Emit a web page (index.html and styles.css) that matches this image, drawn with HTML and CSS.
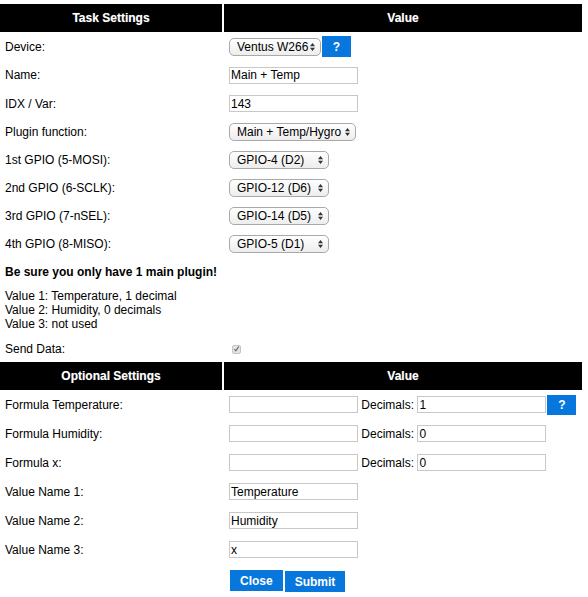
FILE: index.html
```html
<!DOCTYPE html>
<html>
<head>
<meta charset="utf-8">
<link rel="stylesheet" href="styles.css">
</head>
<body>
<table class="settings">
  <colgroup><col class="c1"><col class="c2"></colgroup>
  <tr class="head"><th>Task Settings</th><th class="v">Value</th></tr>
  <tr class="r29"><td>Device:</td><td class="v"><span class="sel w92"><span>Ventus W266</span><svg class="arr" width="7" height="10" viewBox="0 0 7 10"><path d="M1 4.2L3.5 1 6 4.2Z M1 5.8L3.5 9 6 5.8Z" fill="#333"/></svg></span><a class="btn q">?</a></td></tr>
  <tr class="r28"><td>Name:</td><td class="v"><input class="inp" value="Main + Temp"></td></tr>
  <tr class="r29"><td>IDX / Var:</td><td class="v"><input class="inp" value="143"></td></tr>
  <tr class="r28"><td>Plugin function:</td><td class="v"><span class="sel w127"><span>Main + Temp/Hygro</span><svg class="arr" width="7" height="10" viewBox="0 0 7 10"><path d="M1 4.2L3.5 1 6 4.2Z M1 5.8L3.5 9 6 5.8Z" fill="#333"/></svg></span></td></tr>
  <tr class="r28"><td>1st GPIO (5-MOSI):</td><td class="v"><span class="sel w100"><span>GPIO-4 (D2)</span><svg class="arr" width="7" height="10" viewBox="0 0 7 10"><path d="M1 4.2L3.5 1 6 4.2Z M1 5.8L3.5 9 6 5.8Z" fill="#333"/></svg></span></td></tr>
  <tr class="r28"><td>2nd GPIO (6-SCLK):</td><td class="v"><span class="sel w100"><span>GPIO-12 (D6)</span><svg class="arr" width="7" height="10" viewBox="0 0 7 10"><path d="M1 4.2L3.5 1 6 4.2Z M1 5.8L3.5 9 6 5.8Z" fill="#333"/></svg></span></td></tr>
  <tr class="r28"><td>3rd GPIO (7-nSEL):</td><td class="v"><span class="sel w100"><span>GPIO-14 (D5)</span><svg class="arr" width="7" height="10" viewBox="0 0 7 10"><path d="M1 4.2L3.5 1 6 4.2Z M1 5.8L3.5 9 6 5.8Z" fill="#333"/></svg></span></td></tr>
  <tr class="r28"><td>4th GPIO (8-MISO):</td><td class="v"><span class="sel w100"><span>GPIO-5 (D1)</span><svg class="arr" width="7" height="10" viewBox="0 0 7 10"><path d="M1 4.2L3.5 1 6 4.2Z M1 5.8L3.5 9 6 5.8Z" fill="#333"/></svg></span></td></tr>
  <tr class="note"><td colspan="2"><b>Be sure you only have 1 main plugin!</b></td></tr>
  <tr class="vals"><td colspan="2">Value 1: Temperature, 1 decimal<br>Value 2: Humidity, 0 decimals<br>Value 3: not used</td></tr>
  <tr class="r27"><td>Send Data:</td><td class="v"><span class="chk"><svg width="8" height="8" viewBox="0 0 8 8"><path d="M1.5 4.2L3.2 6 6.6 1.4" fill="none" stroke="#6e6e6e" stroke-width="1.4"/></svg></span></td></tr>
  <tr class="head"><th>Optional Settings</th><th class="v">Value</th></tr>
  <tr class="r29"><td>Formula Temperature:</td><td class="v"><input class="inp" value=""> <span class="dec">Decimals:</span> <input class="inp" value="1"><a class="btn q q2">?</a></td></tr>
  <tr class="r29"><td>Formula Humidity:</td><td class="v"><input class="inp" value=""> <span class="dec">Decimals:</span> <input class="inp" value="0"></td></tr>
  <tr class="r29"><td>Formula x:</td><td class="v"><input class="inp" value=""> <span class="dec">Decimals:</span> <input class="inp" value="0"></td></tr>
  <tr class="r29"><td>Value Name 1:</td><td class="v"><input class="inp" value="Temperature"></td></tr>
  <tr class="r29"><td>Value Name 2:</td><td class="v"><input class="inp" value="Humidity"></td></tr>
  <tr class="r29"><td>Value Name 3:</td><td class="v"><input class="inp" value="x"></td></tr>
  <tr class="actions"><td></td><td class="v"><div class="btns"><a class="btn act">Close</a><button class="btn act sub">Submit</button></div></td></tr>
</table>
</body>
</html>
```
FILE: styles.css
```css
html, body {
  margin: 0;
  padding: 0;
  background: #fff;
}
body {
  font-family: "Liberation Sans", Arial, Helvetica, sans-serif;
  font-size: 12px;
  color: #000;
  padding-top: 4px;
}
.settings {
  width: 582px;
  table-layout: fixed;
  border-collapse: separate;
  border-spacing: 0;
}
.c1 { width: 222px; }
.c2 { width: 360px; }
.settings th, .settings td {
  padding: 0 5px;
  text-align: left;
  vertical-align: middle;
  font-size: 12px;
  box-sizing: border-box;
}
.settings .v {
  border-left: 2px solid #fff;
}
.head th {
  background: #000;
  color: #fff;
  font-weight: bold;
  text-align: center;
  height: 28px;
  text-shadow: 0 0 1px rgba(255,255,255,0.4);
}
.r27 td { height: 27px; }
.r28 td { height: 28px; }
.r29 td { height: 29px; }
.note td { height: 27px; }
.vals td {
  height: 50px;
  line-height: 14px;
}
.inp {
  box-sizing: border-box;
  width: 129px;
  height: 17px;
  border: 1px solid #c8c8c8;
  padding: 0 1px;
  margin: 0;
  font-family: "Liberation Sans", Arial, sans-serif;
  font-size: 12px;
  color: #000;
  vertical-align: middle;
  outline: none;
}
.dec {
  vertical-align: middle;
}
.sel {
  box-sizing: border-box;
  display: inline-flex;
  align-items: center;
  justify-content: space-between;
  height: 18px;
  padding: 0 4px 0 7px;
  border: 1px solid #a9a9a9;
  border-radius: 5px;
  background: linear-gradient(#ffffff, #ededed);
  vertical-align: middle;
  white-space: nowrap;
  font-size: 12px;
}
.arr { flex: none; }
.w92 { width: 92px; }
.w100 { width: 100px; }
.w127 { width: 127px; }
.btn {
  box-sizing: border-box;
  display: inline-flex;
  align-items: center;
  justify-content: center;
  background: #0777dd;
  color: #fff;
  font-family: "Liberation Sans", Arial, sans-serif;
  font-weight: bold;
  font-size: 12px;
  border: none;
  margin: 0;
  vertical-align: middle;
  cursor: pointer;
}
.q {
  width: 29px;
  height: 21px;
  margin-left: 1px;
}
.q2 {
  height: 20px;
  margin-left: 1px;
}
.chk {
  display: inline-flex;
  align-items: center;
  justify-content: center;
  box-sizing: border-box;
  width: 9px;
  height: 9px;
  margin-left: 3px;
  border: 1px solid #c4c4c4;
  border-radius: 2px;
  background: #e4e4e4;
  vertical-align: middle;
}
.actions td {
  height: 33px;
  vertical-align: top;
  padding-top: 6px;
}
.btns {
  display: flex;
  align-items: flex-start;
  gap: 2px;
  padding-left: 1px;
}
.act {
  height: 21px;
  padding: 0 10px;
}
.sub {
  margin-top: 1px;
}
```
